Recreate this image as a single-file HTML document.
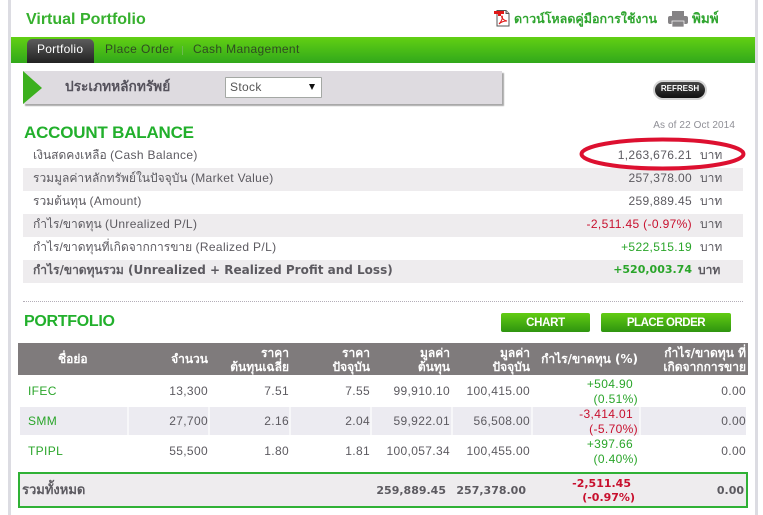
<!DOCTYPE html>
<html><head><meta charset="utf-8">
<style>
html,body{margin:0;padding:0;background:#fff}
body{width:763px;height:515px;position:relative;overflow:hidden;font-family:"Liberation Sans","DejaVu Sans","Noto Sans CJK JP",sans-serif;font-size:12px;color:#5c5a60}
.a{position:absolute}
.t{position:absolute;white-space:nowrap;line-height:14px}
.r{text-align:right}
.e,.r{letter-spacing:.35px}
.g{color:#2aa52a}.red{color:#c8102e}
.b{font-family:"DejaVu Sans","Liberation Sans",sans-serif;font-weight:bold;font-size:11px;letter-spacing:0}
.hd{color:#fff;font-family:"DejaVu Sans","Liberation Sans",sans-serif;font-weight:bold;font-size:12px;line-height:14px;position:absolute;text-align:right;white-space:nowrap}
.h1{position:absolute;white-space:nowrap;font-family:"Liberation Sans",sans-serif;color:#22b02c;font-weight:bold}
.w{position:absolute;top:407px;width:2px;height:28px;background:#f7f7f9}
</style></head><body>
<div class="a" style="left:8px;top:0;width:3px;height:515px;background:#dcdce2"></div>
<div class="a" style="left:755px;top:0;width:3px;height:515px;background:#dcdce2"></div>

<div class="h1" style="left:26px;top:10px;font-size:16px;line-height:20px;color:#36b02e">Virtual Portfolio</div>

<svg class="a" style="left:493px;top:9px" width="18" height="18" viewBox="0 0 18 18">
<path d="M4 1.5H13L16 4.5V17H4Z" fill="#fff" stroke="#555"/>
<path d="M13 1.5V4.5H16" fill="#ccc" stroke="#555"/>
<rect x="1" y="2" width="10" height="3" fill="#e01818"/>
<rect x="5" y="4" width="3" height="3" fill="#e01818"/>
<path d="M6 15C9 12 10 8 9 7C8 7 9 11 14 12C11 12 8 13 6 15Z" fill="none" stroke="#e01818" stroke-width="1.1"/>
</svg>
<div class="t" style="left:514px;top:11px;font-size:12.5px;font-weight:bold;line-height:16px;color:#2fa52f">ดาวน์โหลดคู่มือการใช้งาน</div>
<svg class="a" style="left:668px;top:10px" width="20" height="18" viewBox="0 0 20 18">
<rect x="4" y="1" width="12" height="5" fill="#858385"/>
<rect x="0" y="6" width="20" height="8" rx="2" fill="#858385"/>
<rect x="4" y="11" width="12" height="6" fill="#858385" stroke="#fff" stroke-width=".7"/>
</svg>
<div class="t" style="left:692px;top:11px;font-size:13.5px;font-weight:bold;line-height:16px;color:#2fa52f">พิมพ์</div>

<div class="a" style="left:11px;top:37px;width:744px;height:26px;background:linear-gradient(#62d013,#31a81b)"></div>
<div class="a" style="left:27px;top:39px;width:67px;height:24px;border-radius:5px 5px 0 0;background:linear-gradient(#5c5c5c,#222)"></div>
<div class="t" style="left:37px;top:42px;color:#fff;font-size:12px;letter-spacing:.25px">Portfolio</div>
<div class="t" style="left:105px;top:42px;color:#2f4a22;font-size:12px;letter-spacing:.45px">Place Order</div>
<div class="a" style="left:182px;top:46px;width:1px;height:9px;background:#6cbb50"></div>
<div class="t" style="left:193px;top:42px;color:#2f4a22;font-size:12px;letter-spacing:.35px">Cash Management</div>

<div class="a" style="left:23px;top:71px;width:479px;height:33px;background:#dedbe0;box-shadow:2px 2px 1px #a8a8a8"></div>
<svg class="a" style="left:23px;top:71px" width="20" height="34"><path d="M0 0L19 17L0 33Z" fill="#3cb01e"/></svg>
<div class="t" style="left:65px;top:80px;font-size:13.7px;font-weight:bold;color:#55525c">ประเภทหลักทรัพย์</div>
<div class="a" style="left:225px;top:77px;width:95px;height:19px;background:#fff;border:1px solid #a4a8a4;border-radius:1px"></div>
<div class="t e" style="left:230px;top:80px;color:#555">Stock</div>
<svg class="a" style="left:308px;top:83px" width="9" height="8"><path d="M1 1H7L4 7Z" fill="#111"/></svg>
<div class="a" style="left:653px;top:80px;width:50px;height:16px;border-radius:10px;background:linear-gradient(#444,#111);border:2px solid #d4d4d4"></div>
<div class="t" style="left:653px;top:82px;width:54px;text-align:center;color:#fff;font-size:8px;font-weight:bold">REFRESH</div>

<div class="t r" style="right:28px;top:119px;font-size:10px;letter-spacing:.1px;color:#8f8f96">As of 22 Oct 2014</div>
<div class="h1" style="left:24px;top:122px;font-size:17px;line-height:22px;letter-spacing:-.2px">ACCOUNT BALANCE</div>

<div class="a" style="left:23px;top:168px;width:720px;height:23px;background:#eeecee"></div>
<div class="a" style="left:23px;top:214px;width:720px;height:23px;background:#eeecee"></div>
<div class="a" style="left:23px;top:260px;width:720px;height:23px;background:#eeecee"></div>

<div class="t" style="left:33px;top:148px">เงินสดคงเหลือ <span class="e">(Cash Balance)</span></div>
<div class="t" style="left:33px;top:171px">รวมมูลค่าหลักทรัพย์ในปัจจุบัน <span class="e">(Market Value)</span></div>
<div class="t" style="left:33px;top:194px">รวมต้นทุน <span class="e">(Amount)</span></div>
<div class="t" style="left:33px;top:217px">กำไร/ขาดทุน <span class="e">(Unrealized P/L)</span></div>
<div class="t" style="left:33px;top:240px">กำไร/ขาดทุนที่เกิดจากการขาย <span class="e">(Realized P/L)</span></div>
<div class="t b" style="left:33px;top:263px;font-size:12px">กำไร/ขาดทุนรวม (Unrealized + Realized Profit and Loss)</div>

<div class="t r" style="right:71px;top:148px">1,263,676.21</div>
<div class="t r" style="right:71px;top:171px">257,378.00</div>
<div class="t r" style="right:71px;top:194px">259,889.45</div>
<div class="t r red" style="right:71px;top:217px">-2,511.45 (-0.97%)</div>
<div class="t r g" style="right:71px;top:240px">+522,515.19</div>
<div class="t r b g" style="right:71px;top:263px">+520,003.74</div>
<div class="t" style="left:700px;top:148px">บาท</div>
<div class="t" style="left:700px;top:171px">บาท</div>
<div class="t" style="left:700px;top:194px">บาท</div>
<div class="t" style="left:700px;top:217px">บาท</div>
<div class="t" style="left:700px;top:240px">บาท</div>
<div class="t b" style="left:698px;top:263px;font-size:12px">บาท</div>

<svg class="a" style="left:578px;top:136px" width="170" height="37"><ellipse cx="84.5" cy="18" rx="81" ry="14.5" fill="none" stroke="#dd1030" stroke-width="4"/></svg>

<div class="a" style="left:23px;top:301px;width:720px;height:0;border-top:1px dotted #b4aeb8"></div>
<div class="h1" style="left:24px;top:311px;font-size:16px;line-height:22px;letter-spacing:-.3px">PORTFOLIO</div>

<div class="a" style="left:501px;top:313px;width:89px;height:19px;border-radius:2px;background:linear-gradient(#62cc12,#2e9410)"></div>
<div class="t" style="left:501px;top:316px;width:89px;text-align:center;color:#fff;font-size:11.5px;letter-spacing:-.3px;font-weight:bold">CHART</div>
<div class="a" style="left:601px;top:313px;width:130px;height:19px;border-radius:2px;background:linear-gradient(#62cc12,#2e9410)"></div>
<div class="t" style="left:601px;top:316px;width:130px;text-align:center;color:#fff;font-size:11.5px;letter-spacing:-.5px;font-weight:bold">PLACE ORDER</div>

<div class="a" style="left:18px;top:343px;width:730px;height:32px;background:#7f7b7c"></div>
<div class="hd" style="left:58px;top:352px">ชื่อย่อ</div>
<div class="hd" style="right:555px;top:352px">จำนวน</div>
<div class="hd" style="right:474px;top:346px">ราคา</div>
<div class="hd" style="right:474px;top:360px">ต้นทุนเฉลี่ย</div>
<div class="hd" style="right:393px;top:346px">ราคา</div>
<div class="hd" style="right:393px;top:360px">ปัจจุบัน</div>
<div class="hd" style="right:313px;top:346px">มูลค่า</div>
<div class="hd" style="right:313px;top:360px">ต้นทุน</div>
<div class="hd" style="right:233px;top:346px">มูลค่า</div>
<div class="hd" style="right:233px;top:360px">ปัจจุบัน</div>
<div class="hd" style="right:125px;top:352px">กำไร/ขาดทุน (%)</div>
<div class="hd" style="right:17px;top:346px">กำไร/ขาดทุน ที่</div>
<div class="hd" style="right:17px;top:360px">เกิดจากการขาย</div>

<div class="a" style="left:20px;top:407px;width:726px;height:28px;background:#ecebf1"></div>
<div class="w" style="left:127px"></div><div class="w" style="left:208px"></div><div class="w" style="left:289px"></div><div class="w" style="left:370px"></div><div class="w" style="left:451px"></div><div class="w" style="left:531px"></div><div class="w" style="left:639px"></div>

<div class="t g e" style="left:28px;top:384px">IFEC</div>
<div class="t r" style="right:555px;top:384px">13,300</div>
<div class="t r" style="right:474px;top:384px">7.51</div>
<div class="t r" style="right:393px;top:384px">7.55</div>
<div class="t r" style="right:313px;top:384px">99,910.10</div>
<div class="t r" style="right:233px;top:384px">100,415.00</div>
<div class="t r g" style="right:130px;top:377px">+504.90</div>
<div class="t r g" style="right:125px;top:392px">(0.51%)</div>
<div class="t r" style="right:17px;top:384px">0.00</div>

<div class="t g e" style="left:28px;top:414px">SMM</div>
<div class="t r" style="right:555px;top:414px">27,700</div>
<div class="t r" style="right:474px;top:414px">2.16</div>
<div class="t r" style="right:393px;top:414px">2.04</div>
<div class="t r" style="right:313px;top:414px">59,922.01</div>
<div class="t r" style="right:233px;top:414px">56,508.00</div>
<div class="t r red" style="right:130px;top:407px">-3,414.01</div>
<div class="t r red" style="right:125px;top:422px">(-5.70%)</div>
<div class="t r" style="right:17px;top:414px">0.00</div>

<div class="t g e" style="left:28px;top:444px">TPIPL</div>
<div class="t r" style="right:555px;top:444px">55,500</div>
<div class="t r" style="right:474px;top:444px">1.80</div>
<div class="t r" style="right:393px;top:444px">1.81</div>
<div class="t r" style="right:313px;top:444px">100,057.34</div>
<div class="t r" style="right:233px;top:444px">100,455.00</div>
<div class="t r g" style="right:130px;top:437px">+397.66</div>
<div class="t r g" style="right:125px;top:452px">(0.40%)</div>
<div class="t r" style="right:17px;top:444px">0.00</div>

<div class="a" style="left:18px;top:472px;width:726px;height:32px;background:#eeecee;border:2px solid #2fb135"></div>
<div class="t b" style="left:22px;top:484px;font-size:13px">รวมทั้งหมด</div>
<div class="t r b" style="right:317px;top:484px">259,889.45</div>
<div class="t r b" style="right:237px;top:484px">257,378.00</div>
<div class="t r b red" style="right:132px;top:477px">-2,511.45</div>
<div class="t r b red" style="right:128px;top:491px">(-0.97%)</div>
<div class="t r b" style="right:19px;top:484px">0.00</div>
</body></html>
